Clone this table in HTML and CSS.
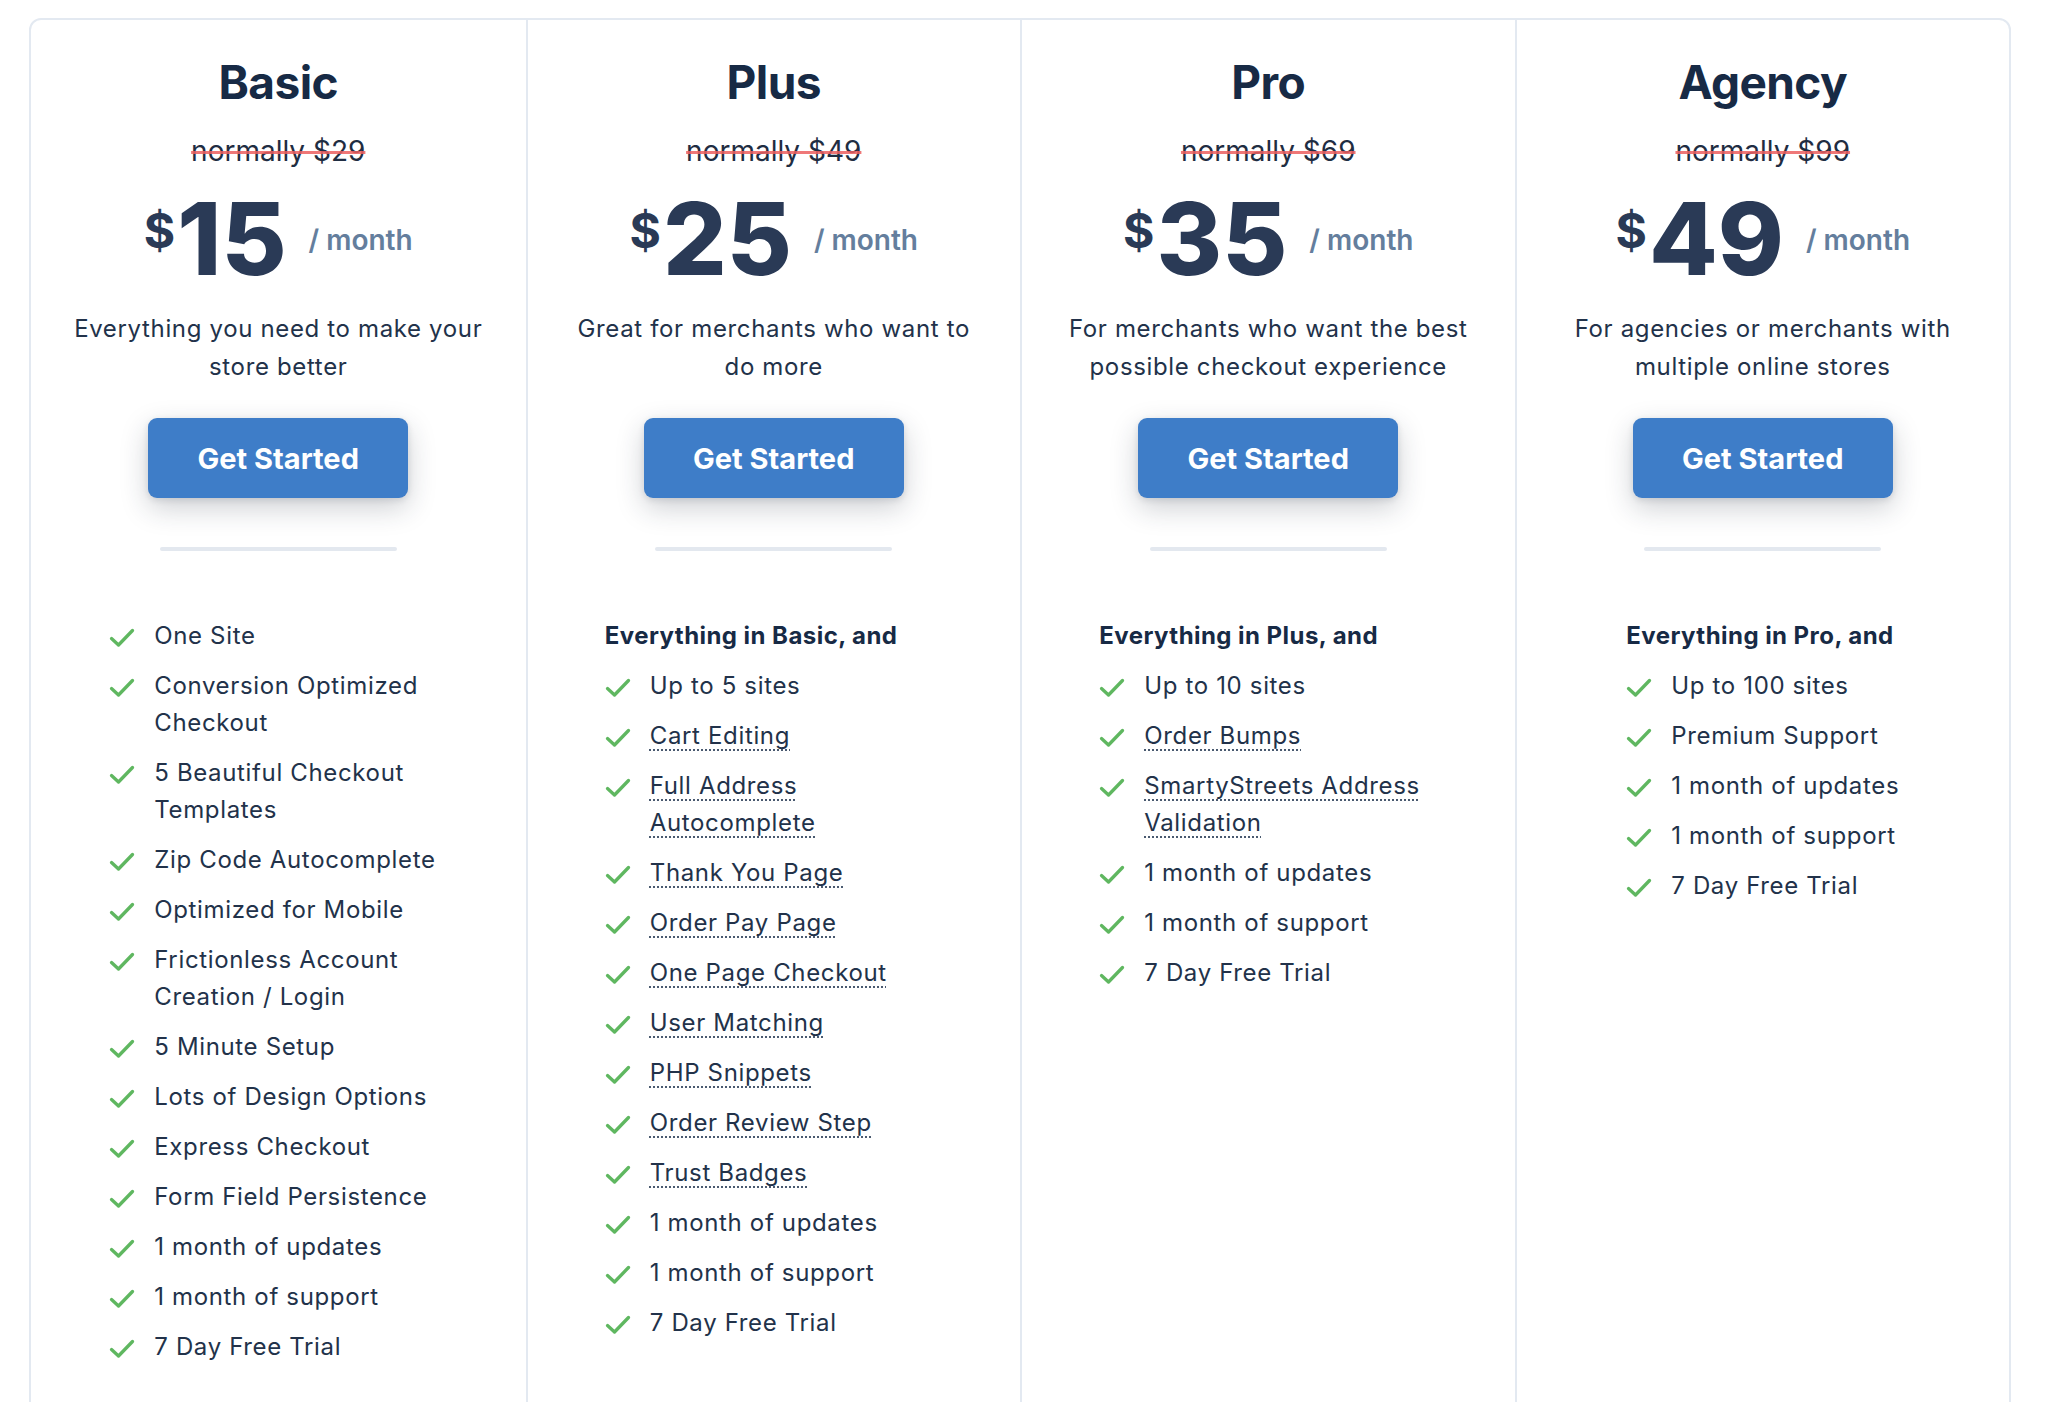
FILE: index.html
```html
<!DOCTYPE html>
<html lang="en">
<head>
<meta charset="utf-8">
<title>Pricing</title>
<link rel="stylesheet" href="styles.css">
</head>
<body>
<svg width="0" height="0" class="defs" aria-hidden="true">
  <symbol id="chk" viewBox="0 0 26 20">
    <path d="M2.5 10.5 L9.5 17 L23.5 2.5" fill="none" stroke="currentColor" stroke-width="3.3" stroke-linecap="round" stroke-linejoin="round"/>
  </symbol>
</svg>
<div class="pricing">
  <div class="plan">
    <h2 class="plan-name">Basic</h2>
    <div class="was">normally $29</div>
    <div class="price"><span class="cur">$</span><span class="amt">15</span><span class="per">/ month</span></div>
    <p class="desc">Everything you need to make your store better</p>
    <a class="btn" href="#">Get Started</a>
    <div class="rule"></div>
    <ul class="features">
      <li><svg class="ic"><use href="#chk"/></svg><span>One Site</span></li>
      <li><svg class="ic"><use href="#chk"/></svg><span>Conversion Optimized Checkout</span></li>
      <li><svg class="ic"><use href="#chk"/></svg><span>5 Beautiful Checkout Templates</span></li>
      <li><svg class="ic"><use href="#chk"/></svg><span>Zip Code Autocomplete</span></li>
      <li><svg class="ic"><use href="#chk"/></svg><span>Optimized for Mobile</span></li>
      <li><svg class="ic"><use href="#chk"/></svg><span>Frictionless Account Creation / Login</span></li>
      <li><svg class="ic"><use href="#chk"/></svg><span>5 Minute Setup</span></li>
      <li><svg class="ic"><use href="#chk"/></svg><span>Lots of Design Options</span></li>
      <li><svg class="ic"><use href="#chk"/></svg><span>Express Checkout</span></li>
      <li><svg class="ic"><use href="#chk"/></svg><span>Form Field Persistence</span></li>
      <li><svg class="ic"><use href="#chk"/></svg><span>1 month of updates</span></li>
      <li><svg class="ic"><use href="#chk"/></svg><span>1 month of support</span></li>
      <li><svg class="ic"><use href="#chk"/></svg><span>7 Day Free Trial</span></li>
    </ul>
  </div>
  <div class="plan">
    <h2 class="plan-name">Plus</h2>
    <div class="was">normally $49</div>
    <div class="price"><span class="cur">$</span><span class="amt">25</span><span class="per">/ month</span></div>
    <p class="desc">Great for merchants who want to do more</p>
    <a class="btn" href="#">Get Started</a>
    <div class="rule"></div>
    <ul class="features">
      <li class="lead">Everything in Basic, and</li>
      <li><svg class="ic"><use href="#chk"/></svg><span>Up to 5 sites</span></li>
      <li><svg class="ic"><use href="#chk"/></svg><span class="tip">Cart Editing</span></li>
      <li><svg class="ic"><use href="#chk"/></svg><span class="tip">Full Address Autocomplete</span></li>
      <li><svg class="ic"><use href="#chk"/></svg><span class="tip">Thank You Page</span></li>
      <li><svg class="ic"><use href="#chk"/></svg><span class="tip">Order Pay Page</span></li>
      <li><svg class="ic"><use href="#chk"/></svg><span class="tip">One Page Checkout</span></li>
      <li><svg class="ic"><use href="#chk"/></svg><span class="tip">User Matching</span></li>
      <li><svg class="ic"><use href="#chk"/></svg><span class="tip">PHP Snippets</span></li>
      <li><svg class="ic"><use href="#chk"/></svg><span class="tip">Order Review Step</span></li>
      <li><svg class="ic"><use href="#chk"/></svg><span class="tip">Trust Badges</span></li>
      <li><svg class="ic"><use href="#chk"/></svg><span>1 month of updates</span></li>
      <li><svg class="ic"><use href="#chk"/></svg><span>1 month of support</span></li>
      <li><svg class="ic"><use href="#chk"/></svg><span>7 Day Free Trial</span></li>
    </ul>
  </div>
  <div class="plan">
    <h2 class="plan-name">Pro</h2>
    <div class="was">normally $69</div>
    <div class="price"><span class="cur">$</span><span class="amt">35</span><span class="per">/ month</span></div>
    <p class="desc">For merchants who want the best possible checkout experience</p>
    <a class="btn" href="#">Get Started</a>
    <div class="rule"></div>
    <ul class="features">
      <li class="lead">Everything in Plus, and</li>
      <li><svg class="ic"><use href="#chk"/></svg><span>Up to 10 sites</span></li>
      <li><svg class="ic"><use href="#chk"/></svg><span class="tip">Order Bumps</span></li>
      <li><svg class="ic"><use href="#chk"/></svg><span class="tip">SmartyStreets Address Validation</span></li>
      <li><svg class="ic"><use href="#chk"/></svg><span>1 month of updates</span></li>
      <li><svg class="ic"><use href="#chk"/></svg><span>1 month of support</span></li>
      <li><svg class="ic"><use href="#chk"/></svg><span>7 Day Free Trial</span></li>
    </ul>
  </div>
  <div class="plan">
    <h2 class="plan-name">Agency</h2>
    <div class="was">normally $99</div>
    <div class="price"><span class="cur">$</span><span class="amt">49</span><span class="per">/ month</span></div>
    <p class="desc">For agencies or merchants with multiple online stores</p>
    <a class="btn" href="#">Get Started</a>
    <div class="rule"></div>
    <ul class="features">
      <li class="lead">Everything in Pro, and</li>
      <li><svg class="ic"><use href="#chk"/></svg><span>Up to 100 sites</span></li>
      <li><svg class="ic"><use href="#chk"/></svg><span>Premium Support</span></li>
      <li><svg class="ic"><use href="#chk"/></svg><span>1 month of updates</span></li>
      <li><svg class="ic"><use href="#chk"/></svg><span>1 month of support</span></li>
      <li><svg class="ic"><use href="#chk"/></svg><span>7 Day Free Trial</span></li>
    </ul>
  </div>
</div>
</body>
</html>
```
FILE: styles.css
```css
* { box-sizing: border-box; }
html, body { margin: 0; padding: 0; background: #fff; }
body {
  font-family: Inter, "Noto Sans", "Liberation Sans", sans-serif;
  color: #1f2d42;
  overflow: hidden;
  height: 1402px;
}
.defs { position: absolute; width: 0; height: 0; }

.pricing {
  margin: 18px 0 0 29px;
  width: 1982px;
  height: 1400px;
  border: 2px solid #e3e9f1;
  border-radius: 12px;
  display: grid;
  grid-template-columns: repeat(4, 1fr);
}
.plan {
  display: flex;
  flex-direction: column;
  align-items: center;
  padding: 34px 36px 0;
  border-left: 2px solid #e3e9f1;
}
.plan:first-child { border-left: none; }

.plan-name {
  margin: 0;
  font-size: 46px;
  line-height: 56px;
  font-weight: 700;
  letter-spacing: -0.6px;
  color: #172a45;
}
.was {
  margin-top: 21px;
  font-size: 28px;
  line-height: 40px;
  color: #1f2d42;
  text-decoration: line-through;
  text-decoration-color: rgba(236, 96, 96, 0.85);
  text-decoration-thickness: 3px;
}
.price {
  margin-top: 18px;
  display: flex;
  align-items: center;
  height: 100px;
  color: #2a3a56;
}
.cur {
  font-size: 48px;
  font-weight: 700;
  line-height: 1;
  position: relative;
  top: -8px;
  margin-right: 2px;
}
.amt {
  font-size: 100px;
  font-weight: 800;
  line-height: 1;
}
.per {
  margin-left: 22px;
  font-size: 28px;
  font-weight: 600;
  color: #647e9d;
  position: relative;
  top: 1px;
}
.desc {
  margin: 21px 0 0;
  font-size: 24px;
  line-height: 38px;
  letter-spacing: 0.65px;
  text-align: center;
  color: #22324a;
}
.btn {
  margin-top: 32px;
  width: 260px;
  height: 80px;
  display: flex;
  align-items: center;
  justify-content: center;
  background: #3e7dc8;
  color: #fff;
  border-radius: 9px;
  text-decoration: none;
  font-size: 29px;
  font-weight: 700;
  box-shadow: 0 10px 28px rgba(30, 40, 60, 0.22), 0 2px 6px rgba(30, 40, 60, 0.12);
}
.rule {
  margin-top: 49px;
  width: 237px;
  height: 4px;
  background: #e3e8ef;
  border-radius: 2px;
}
.features {
  list-style: none;
  margin: 66px 0 0;
  padding: 0;
  width: fit-content;
  max-width: 338px;
  display: flex;
  flex-direction: column;
  gap: 13px;
}
.features li {
  display: flex;
  align-items: flex-start;
  font-size: 24px;
  line-height: 37px;
  letter-spacing: 0.65px;
  color: #22324a;
}
.features li.lead {
  font-weight: 700;
  letter-spacing: 0.45px;
  color: #172a45;
}
.ic {
  flex: none;
  width: 26px;
  height: 20px;
  margin-top: 11px;
  margin-right: 19px;
  color: #5fb760;
}
.tip {
  text-decoration: underline dotted;
  text-decoration-thickness: 2px;
  text-underline-offset: 5px;
  text-decoration-color: #4a5a70;
}
```
